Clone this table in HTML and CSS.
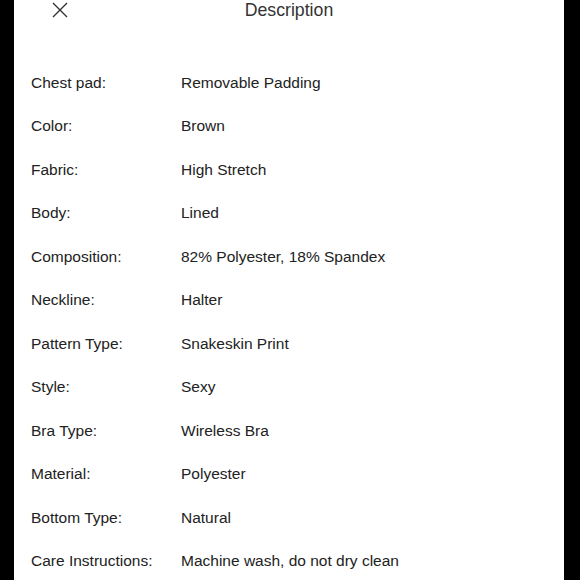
FILE: index.html
```html
<!DOCTYPE html>
<html>
<head>
<meta charset="utf-8">
<link rel="stylesheet" href="styles.css">
</head>
<body>
<div class="panel">
  <div class="header">
    <div class="close">
      <svg width="16" height="16" viewBox="0 0 16 16"><path d="M1 1 L15 15 M15 1 L1 15" stroke="#333" stroke-width="1.4" fill="none"/></svg>
    </div>
    <div class="title">Description</div>
    <div></div>
  </div>
  <div class="specs">
    <div class="label">Chest pad:</div><div class="value">Removable Padding</div>
    <div class="label">Color:</div><div class="value">Brown</div>
    <div class="label">Fabric:</div><div class="value">High Stretch</div>
    <div class="label">Body:</div><div class="value">Lined</div>
    <div class="label">Composition:</div><div class="value">82% Polyester, 18% Spandex</div>
    <div class="label">Neckline:</div><div class="value">Halter</div>
    <div class="label">Pattern Type:</div><div class="value">Snakeskin Print</div>
    <div class="label">Style:</div><div class="value">Sexy</div>
    <div class="label">Bra Type:</div><div class="value">Wireless Bra</div>
    <div class="label">Material:</div><div class="value">Polyester</div>
    <div class="label">Bottom Type:</div><div class="value">Natural</div>
    <div class="label">Care Instructions:</div><div class="value">Machine wash, do not dry clean</div>
  </div>
</div>
</body>
</html>
```
FILE: styles.css
```css
html, body {
  margin: 0;
  padding: 0;
  background: #000;
  height: 580px;
  overflow: hidden;
}
.panel {
  margin-left: 14px;
  width: 550px;
  height: 580px;
  background: #fff;
  overflow: hidden;
  font-family: "Liberation Sans", Arial, sans-serif;
}
.header {
  height: 60.5px;
  display: grid;
  grid-template-columns: 1fr auto 1fr;
  align-items: start;
}
.close {
  padding-left: 38px;
  padding-top: 2px;
  line-height: 0;
}
.title {
  font-size: 17.7px;
  line-height: 20px;
  color: #333;
}
.specs {
  display: grid;
  grid-template-columns: 150px 1fr;
  padding-left: 17px;
  font-size: 15.5px;
  line-height: 43.5px;
  color: #222;
}
.label, .value {
  white-space: nowrap;
}
```
